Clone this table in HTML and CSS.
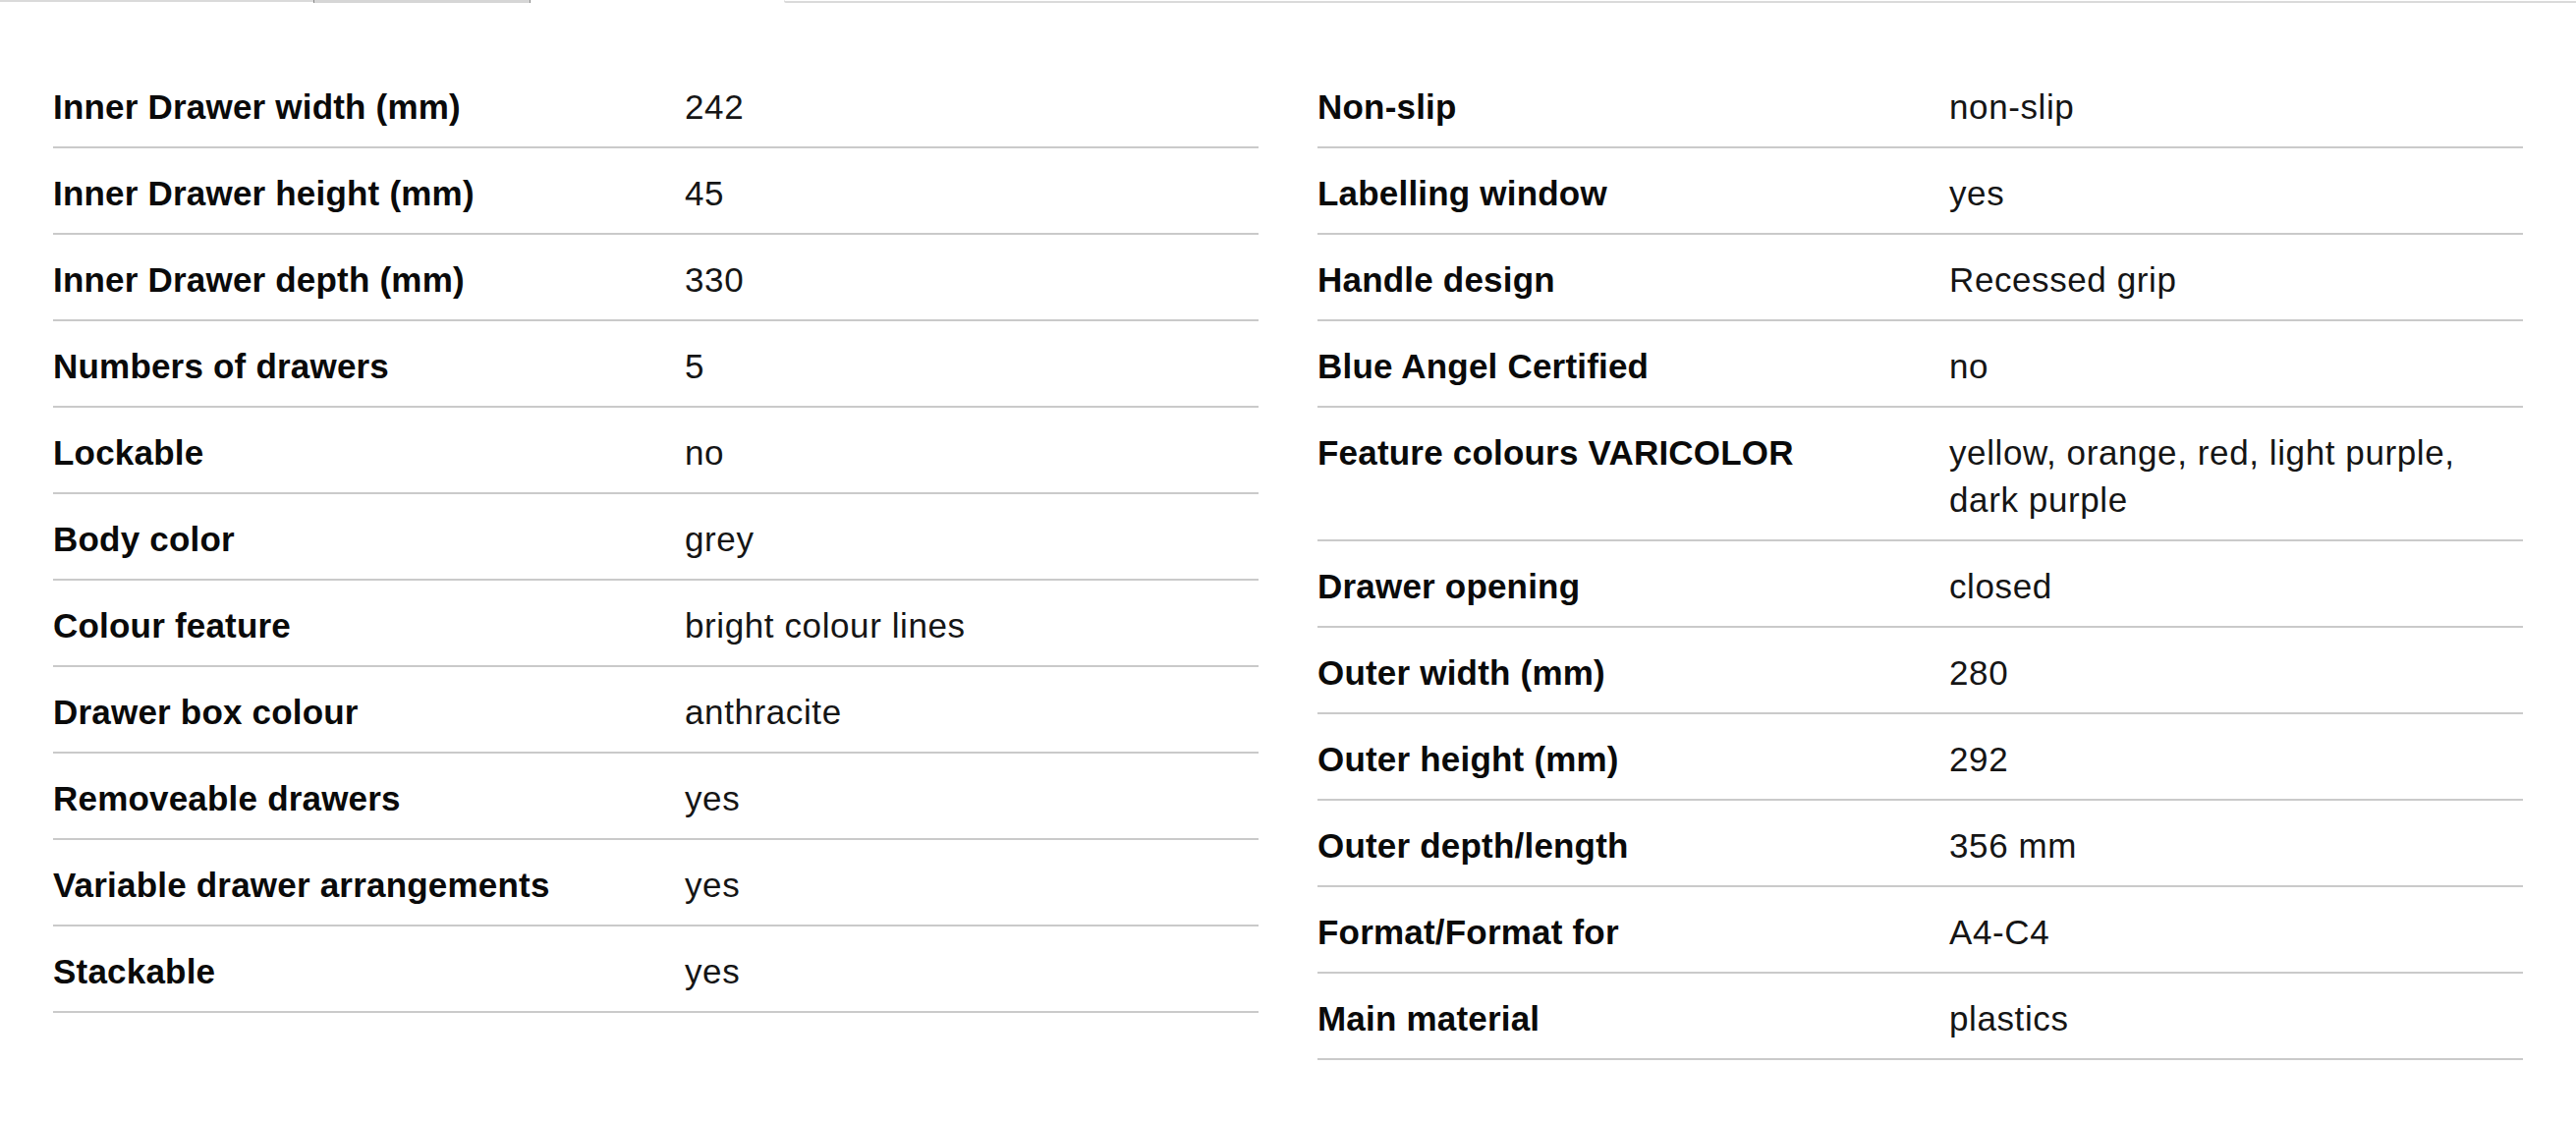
FILE: index.html
```html
<!DOCTYPE html>
<html lang="en">
<head>
<meta charset="utf-8">
<title>Technical data</title>
<link rel="stylesheet" href="styles.css">
</head>
<body>
<div class="tabs">
  <div class="tab tab-first"></div>
  <div class="tab tab-second"></div>
  <div class="tab tab-active"></div>
  <div class="tab tab-rest"></div>
</div>
<div class="specs">
  <dl class="col">
    <div class="row"><dt>Inner Drawer width (mm)</dt><dd>242</dd></div>
    <div class="row"><dt>Inner Drawer height (mm)</dt><dd>45</dd></div>
    <div class="row"><dt>Inner Drawer depth (mm)</dt><dd>330</dd></div>
    <div class="row"><dt>Numbers of drawers</dt><dd>5</dd></div>
    <div class="row"><dt>Lockable</dt><dd>no</dd></div>
    <div class="row"><dt>Body color</dt><dd>grey</dd></div>
    <div class="row"><dt>Colour feature</dt><dd>bright colour lines</dd></div>
    <div class="row"><dt>Drawer box colour</dt><dd>anthracite</dd></div>
    <div class="row"><dt>Removeable drawers</dt><dd>yes</dd></div>
    <div class="row"><dt>Variable drawer arrangements</dt><dd>yes</dd></div>
    <div class="row"><dt>Stackable</dt><dd>yes</dd></div>
  </dl>
  <dl class="col">
    <div class="row"><dt>Non-slip</dt><dd>non-slip</dd></div>
    <div class="row"><dt>Labelling window</dt><dd>yes</dd></div>
    <div class="row"><dt>Handle design</dt><dd>Recessed grip</dd></div>
    <div class="row"><dt>Blue Angel Certified</dt><dd>no</dd></div>
    <div class="row"><dt>Feature colours VARICOLOR</dt><dd>yellow, orange, red, light purple, dark purple</dd></div>
    <div class="row"><dt>Drawer opening</dt><dd>closed</dd></div>
    <div class="row"><dt>Outer width (mm)</dt><dd>280</dd></div>
    <div class="row"><dt>Outer height (mm)</dt><dd>292</dd></div>
    <div class="row"><dt>Outer depth/length</dt><dd>356 mm</dd></div>
    <div class="row"><dt>Format/Format for</dt><dd>A4-C4</dd></div>
    <div class="row"><dt>Main material</dt><dd>plastics</dd></div>
  </dl>
</div>
</body>
</html>
```

FILE: styles.css
```css
html, body {
  margin: 0;
  padding: 0;
  background: #ffffff;
}

body {
  font-family: "Liberation Sans", Arial, sans-serif;
  color: #111111;
}

.tabs {
  display: flex;
  height: 3px;
}

.tab {
  box-sizing: border-box;
  height: 3px;
}

.tab-first {
  width: 319px;
  border-top: 2px solid #dadada;
}

.tab-second {
  width: 221px;
  background: #d6d6d6;
  border-left: 1px solid #8a8a8a;
  border-right: 1px solid #8a8a8a;
}

.tab-active {
  width: 258px;
}

.tab-rest {
  flex: 1;
  border-top: 1px solid transparent;
  border-bottom: 2px solid #dadada;
  border-left: 1px solid #dadada;
  border-bottom-left-radius: 2px;
}

.specs {
  display: grid;
  grid-template-columns: 1fr 1fr;
  column-gap: 60px;
  padding: 60px 54px 0;
  align-items: start;
}

.col {
  margin: 0;
}

.row {
  display: grid;
  grid-template-columns: 643px 1fr;
  padding: 22px 0 16px;
  border-bottom: 2px solid #cacaca;
  font-size: 35px;
  line-height: 48px;
}

.row dt {
  font-weight: bold;
  letter-spacing: 0.2px;
  color: #0a0a0a;
  margin: 0;
}

.row dd {
  margin: 0;
  font-weight: normal;
  letter-spacing: 0.6px;
  color: #151515;
}
```
